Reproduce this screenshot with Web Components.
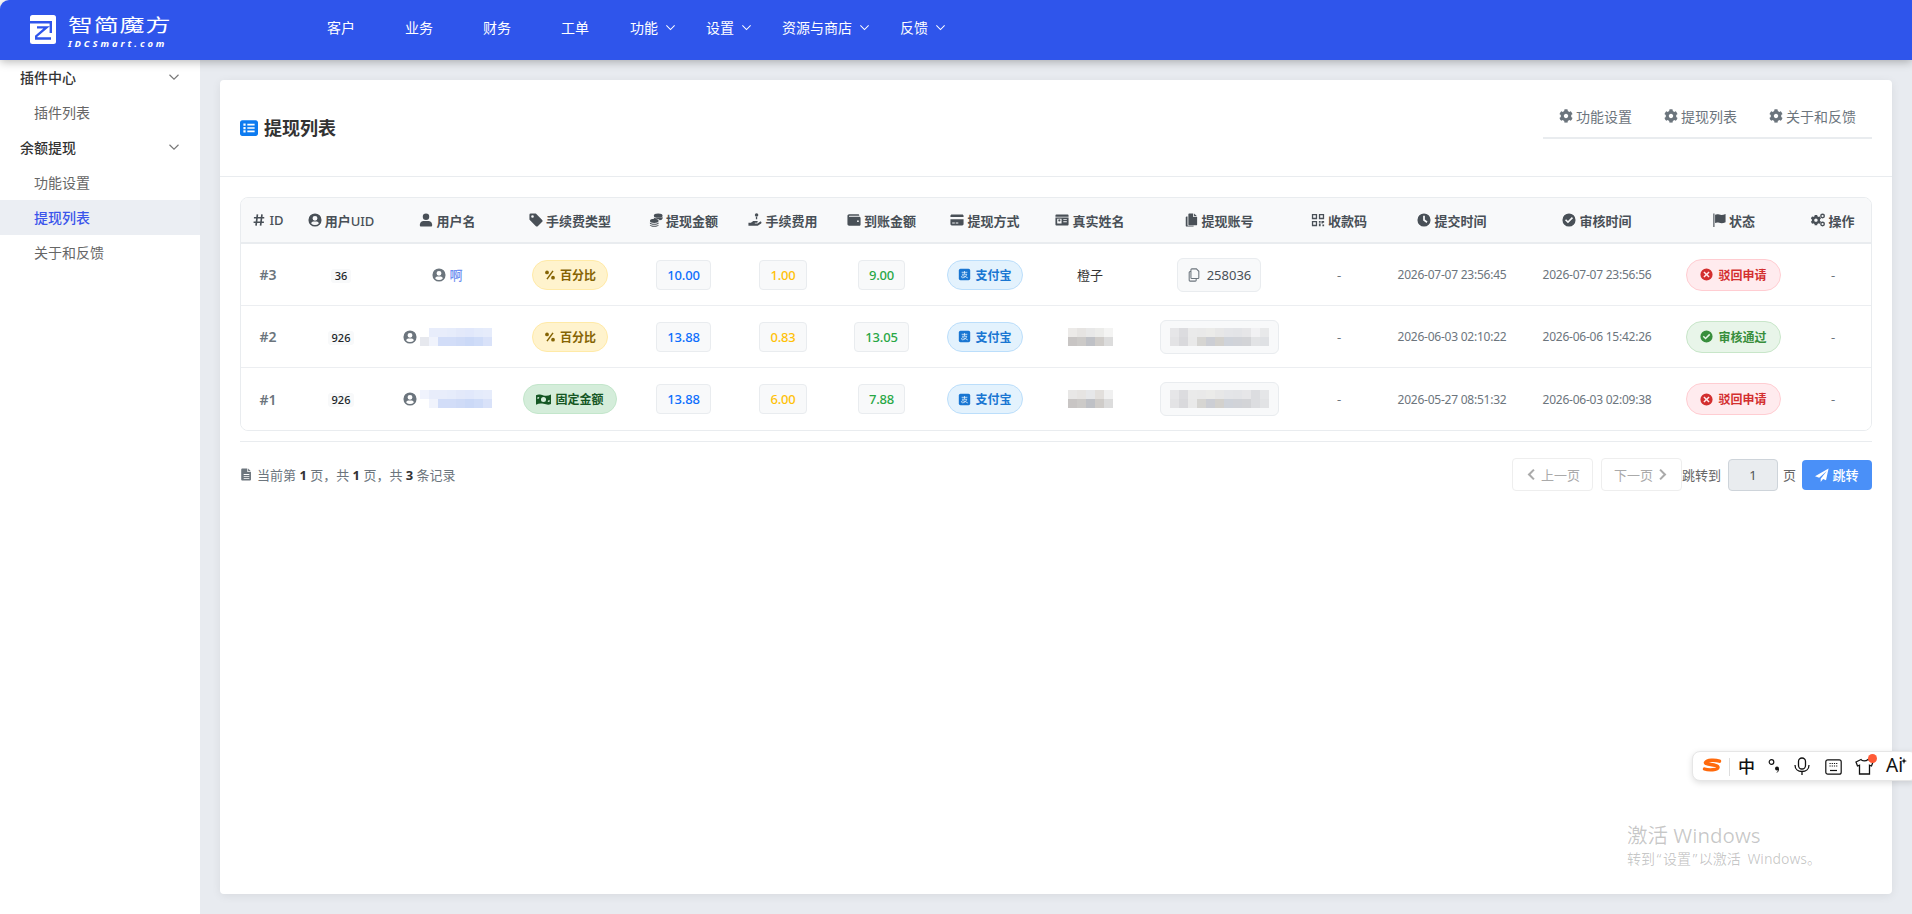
<!DOCTYPE html>
<html lang="zh"><head><meta charset="utf-8"><title>提现列表</title>
<style>
html,body{margin:0;padding:0;height:100%;background:#fff;overflow:hidden}
body{font-family:"Noto Sans","Noto Sans CJK SC",sans-serif;font-size:14px;color:#333}
</style></head><body>
<idc-app>
  <idc-topbar slot="top">
    <nav-item>客户</nav-item><nav-item>业务</nav-item><nav-item>财务</nav-item><nav-item>工单</nav-item>
    <nav-item drop>功能</nav-item><nav-item drop>设置</nav-item><nav-item drop>资源与商店</nav-item><nav-item drop>反馈</nav-item>
  </idc-topbar>
  <idc-sidebar slot="side">
    <side-item head>插件中心</side-item><side-item>插件列表</side-item>
    <side-item head>余额提现</side-item><side-item>功能设置</side-item>
    <side-item active>提现列表</side-item><side-item>关于和反馈</side-item>
  </idc-sidebar>
  <wd-card>
    <tab-item slot="tabs">功能设置</tab-item><tab-item slot="tabs">提现列表</tab-item><tab-item slot="tabs">关于和反馈</tab-item>
    <wd-table>
      <wd-row head>
        <head-cell icon="hash"><span style="font-weight:500">ID</span></head-cell><head-cell icon="ucircle"><span>用户<span style="font-weight:500">UID</span></span></head-cell><head-cell icon="user">用户名</head-cell>
        <head-cell icon="tag">手续费类型</head-cell><head-cell icon="coins">提现金额</head-cell><head-cell icon="hand">手续费用</head-cell>
        <head-cell icon="wallet">到账金额</head-cell><head-cell icon="card">提现方式</head-cell><head-cell icon="idcard">真实姓名</head-cell>
        <head-cell icon="copy">提现账号</head-cell><head-cell icon="qr">收款码</head-cell><head-cell icon="clock">提交时间</head-cell>
        <head-cell icon="check">审核时间</head-cell><head-cell icon="flag">状态</head-cell><head-cell icon="cogs">操作</head-cell>
      </wd-row>
      <wd-row>
        <t-cell kind="id">#3</t-cell><t-cell><uid-badge>36</uid-badge></t-cell>
        <t-cell><user-name>啊</user-name></t-cell>
        <t-cell><s-pill tone="yellow" icon="percent">百分比</s-pill></t-cell>
        <t-cell><amt-box tone="blue">10.00</amt-box></t-cell><t-cell><amt-box tone="orange">1.00</amt-box></t-cell><t-cell><amt-box tone="green">9.00</amt-box></t-cell>
        <t-cell><s-pill tone="blue" icon="alipay">支付宝</s-pill></t-cell>
        <t-cell kind="name">橙子</t-cell>
        <t-cell><acct-box icon>258036</acct-box></t-cell>
        <t-cell kind="dim">-</t-cell><t-cell kind="time">2026-07-07 23:56:45</t-cell><t-cell kind="time">2026-07-07 23:56:56</t-cell>
        <t-cell><s-pill big tone="red" icon="times">驳回申请</s-pill></t-cell><t-cell kind="dim">-</t-cell>
      </wd-row>
      <wd-row>
        <t-cell kind="id">#2</t-cell><t-cell><uid-badge>926</uid-badge></t-cell>
        <t-cell><user-name><mosaic-blur cols="8" colors="#fff,#e8edfb,#e8edfb,#e6ecfb,#e3e9fa,#e1e8fb,#e4ebfb,#e6ecfb,#e6e8ee,#f0f3fc,#d2ddf8,#d2ddf8,#cfdbf7,#cbd9f7,#cfdcf8,#d9e2f9"></mosaic-blur></user-name></t-cell>
        <t-cell><s-pill tone="yellow" icon="percent">百分比</s-pill></t-cell>
        <t-cell><amt-box tone="blue">13.88</amt-box></t-cell><t-cell><amt-box tone="orange">0.83</amt-box></t-cell><t-cell><amt-box tone="green">13.05</amt-box></t-cell>
        <t-cell><s-pill tone="blue" icon="alipay">支付宝</s-pill></t-cell>
        <t-cell><mosaic-blur cols="5" colors="#eceae8,#e6e4e2,#e8e8e8,#ececea,#f4f4f3,#c8c5c4,#cccac8,#bfc1c6,#cfccc9,#dcdcdc"></mosaic-blur></t-cell>
        <t-cell><acct-box><mosaic-blur cols="11" colors="#e6e6e8,#dcdcdf,#eaeaea,#e9e9e9,#ebebe9,#e7e7e7,#e4e5e8,#e3e4e7,#e6e6e8,#f1f1f3,#e8e9ea,#e3e3e5,#d9d9dc,#e9e9e9,#d6d5d2,#ccced4,#d3d1cd,#cfd3da,#d1d3d8,#d3d4d7,#e2e3e5,#dfe1e4"></mosaic-blur></acct-box></t-cell>
        <t-cell kind="dim">-</t-cell><t-cell kind="time">2026-06-03 02:10:22</t-cell><t-cell kind="time">2026-06-06 15:42:26</t-cell>
        <t-cell><s-pill big tone="green" icon="check">审核通过</s-pill></t-cell><t-cell kind="dim">-</t-cell>
      </wd-row>
      <wd-row last>
        <t-cell kind="id">#1</t-cell><t-cell><uid-badge>926</uid-badge></t-cell>
        <t-cell><user-name><mosaic-blur cols="8" colors="#f0f3fd,#e8edfb,#e8edfb,#e6ecfb,#e3e9fa,#e1e8fb,#e4ebfb,#e6ecfb,#fff,#f0f3fc,#d2ddf8,#d2ddf8,#cfdbf7,#cbd9f7,#cfdcf8,#d9e2f9"></mosaic-blur></user-name></t-cell>
        <t-cell><s-pill tone="dgreen" icon="money">固定金额</s-pill></t-cell>
        <t-cell><amt-box tone="blue">13.88</amt-box></t-cell><t-cell><amt-box tone="orange">6.00</amt-box></t-cell><t-cell><amt-box tone="green">7.88</amt-box></t-cell>
        <t-cell><s-pill tone="blue" icon="alipay">支付宝</s-pill></t-cell>
        <t-cell><mosaic-blur cols="5" colors="#e8e7e6,#e6e4e2,#e6e7e9,#e2dfdc,#f0f0f0,#c8c5c4,#cccac8,#bfc1c6,#cfccc9,#dcdcdc"></mosaic-blur></t-cell>
        <t-cell><acct-box><mosaic-blur cols="11" colors="#e6e6e8,#dcdcdf,#eaeaea,#e9e9e9,#ebebe9,#e7e7e7,#e4e5e8,#e3e4e7,#e6e6e8,#dcdde0,#e5e6e8,#e3e3e5,#d9d9dc,#e9e9e9,#d6d5d2,#ccced4,#d3d1cd,#cfd3da,#d1d3d8,#d3d4d7,#dcdde0,#e2e3e5"></mosaic-blur></acct-box></t-cell>
        <t-cell kind="dim">-</t-cell><t-cell kind="time">2026-05-27 08:51:32</t-cell><t-cell kind="time">2026-06-03 02:09:38</t-cell>
        <t-cell><s-pill big tone="red" icon="times">驳回申请</s-pill></t-cell><t-cell kind="dim">-</t-cell>
      </wd-row>
    </wd-table>
    <wd-pager></wd-pager>
  </wd-card>
  <desktop-overlay slot="over"></desktop-overlay>
</idc-app>
<script>
const COG='M487.4 315.7l-42.6-24.6c4.3-23.2 4.3-47 0-70.2l42.6-24.6c4.9-2.8 7.1-8.6 5.5-14-11.1-35.6-30-67.8-54.7-94.6-3.8-4.1-10-5.1-14.8-2.3L380.8 110c-17.9-15.4-38.5-27.3-60.8-35.1V25.8c0-5.6-3.9-10.5-9.4-11.7-36.7-8.2-74.3-7.8-109.2 0-5.5 1.2-9.4 6.1-9.4 11.7V75c-22.2 7.9-42.8 19.8-60.8 35.1L88.7 85.5c-4.9-2.8-11-1.9-14.8 2.3-24.7 26.7-43.6 58.9-54.7 94.6-1.7 5.4.6 11.2 5.5 14L67.3 221c-4.3 23.2-4.3 47 0 70.2l-42.6 24.6c-4.9 2.8-7.1 8.6-5.5 14 11.1 35.6 30 67.8 54.7 94.6 3.8 4.1 10 5.1 14.8 2.3l42.6-24.6c17.9 15.4 38.5 27.3 60.8 35.1v49.2c0 5.6 3.9 10.5 9.4 11.7 36.7 8.2 74.3 7.8 109.2 0 5.5-1.2 9.4-6.1 9.4-11.7v-49.2c22.2-7.9 42.8-19.8 60.8-35.1l42.6 24.6c4.9 2.8 11 1.9 14.8-2.3 24.7-26.7 43.6-58.9 54.7-94.6 1.5-5.5-.7-11.3-5.6-14.1zM256 336c-44.1 0-80-35.9-80-80s35.9-80 80-80 80 35.9 80 80-35.9 80-80 80z';
const ICONS={
hash:'<path d="M6.2 1.500 4.600 14.500M11.400 1.500 9.800 14.500M2.200 5.400H14M1.800 10.600H13.600" fill="none" stroke="currentColor" stroke-width="1.900"/>',
ucircle:'<path fill-rule="evenodd" d="M8 .5a7.500 7.500 0 1 0 0 15 7.500 7.500 0 0 0 0-15zM8 3.300a2.800 2.800 0 1 1 0 5.600 2.800 2.800 0 0 1 0-5.600zM8 13.700a5.900 5.900 0 0 1-4.500-2.100c.6-1.200 1.800-1.900 3.100-1.900h2.800c1.300 0 2.500.7 3.100 1.900A5.900 5.900 0 0 1 8 13.700z"/>',
user:'<circle cx="8" cy="4.200" r="3.700"/><path d="M5.200 9h5.600c2.300 0 4.200 1.900 4.200 4.200v1.100c0 .7-.6 1.200-1.300 1.200H2.300c-.7 0-1.300-.5-1.300-1.200v-1.100C1 10.900 2.900 9 5.200 9z"/>',
tag:'<path fill-rule="evenodd" d="M.5 2A1.500 1.500 0 0 1 2 .5h5c.4 0 .8.2 1.100.4l7 7c.6.6.6 1.500 0 2.100l-5.100 5.100c-.6.6-1.500.6-2.100 0l-7-7C.7 7.800.5 7.400.5 7zM4 2.500a1.500 1.500 0 1 0 0 3 1.500 1.500 0 0 0 0-3z"/>',
coins:'<ellipse cx="10.500" cy="3" rx="5" ry="2.300"/><path d="M5.500 5.300c2 .8 7 .8 10-.6v1.500c0 1-1.500 1.800-3.200 2.100-1-1-3.200-1.600-5-1.600-1 0-1.800-.5-1.800-1.400zM1 9c0-1.300 2.200-2.300 5-2.300s5 1 5 2.300-2.200 2.300-5 2.300S1 10.300 1 9zM1 10.800c1 1 3 1.500 5 1.500s4-.5 5-1.500v1c0 1.100-2.200 1.700-5 1.700s-5-.6-5-1.700zM1 13.400c1 .7 3 1.100 5 1.100s4-.4 5-1.100v.6c0 1-2.200 1.800-5 1.800S1 15 1 14z"/>',
hand:'<circle cx="9.800" cy="2.300" r="2"/><path d="M9 4.500h1.500v2.500H9zM.5 11h2.800l2-1.400c.4-.3.9-.4 1.400-.4h3.400c.8 0 1.200.6 1 1.200-.1.500-.6.8-1.100.8H7.800v.8H11l2.600-1.900c.5-.4 1.200-.3 1.600.2.400.5.300 1.200-.2 1.600l-3.500 2.500c-.3.200-.6.300-1 .3H.5z"/>',
wallet:'<path fill-rule="evenodd" d="M2.500 1.500h10.500c.6 0 1 .4 1 1V3H2.800a.6.600 0 0 0 0 1.200h11.200c.8 0 1.500.7 1.500 1.500v7.300c0 .8-.7 1.500-1.500 1.500h-11.500C1.400 14.500.5 13.600.5 12.500v-9c0-1.100.9-2 2-2zM12.500 8.400a1 1 0 1 0 0 2 1 1 0 0 0 0-2z"/>',
card:'<path d="M.5 3.300c0-.8.7-1.500 1.500-1.500h12c.8 0 1.500.7 1.500 1.500v1.400H.5zM.5 7.200h15v5.500c0 .8-.7 1.500-1.500 1.500H2c-.8 0-1.500-.7-1.500-1.500zM2.500 10.800v1.100h3v-1.100zM6.500 10.800v1.100h3v-1.100z" fill-rule="evenodd"/>',
idcard:'<path fill-rule="evenodd" d="M1.500 1.800h13c.6 0 1 .4 1 1v10.400c0 .6-.4 1-1 1h-13c-.6 0-1-.4-1-1V2.800c0-.6.4-1 1-1zM.5 4.200v.8h15v-.8zM2.500 6.500v5.500h5V6.500zM9.500 7v1h4V7zM9.500 9.500v1h4v-1z"/><circle cx="5" cy="8.500" r="1.300"/>',
copy:'<path d="M6 .5h4.500v4H15v8.500c0 .6-.4 1-1 1H6c-.6 0-1-.4-1-1V1.500c0-.6.4-1 1-1zM11.500.6l3.400 3h-3.400zM4 4v10c0 .3.200.5.500.5H11v.5c0 .3-.2.5-.5.5H3c-.6 0-1-.4-1-1V5c0-.6.400-1 2-1z"/>',
copyo:'<path fill="none" stroke="currentColor" stroke-width="1.200" d="M5.500 1h5.200l2.800 2.800V11c0 .5-.4 1-1 1H5.500c-.5 0-1-.5-1-1V2c0-.5.500-1 1-1zM4.500 4H3.500c-.5 0-1 .5-1 1v9c0 .5.500 1 1 1h6c.5 0 1-.5 1-1v-2"/>',
qr:'<path fill-rule="evenodd" d="M1 1h6v6H1zM2.500 2.500v3h3v-3zM9 1h6v6H9zM10.500 2.500v3h3v-3zM1 9h6v6H1zM2.500 10.500v3h3v-3zM9 9h2v2H9zM12 9h3v2h-1.500v1H12zM9 12h2v3H9zM13 13h2v2h-2z"/>',
clock:'<path fill-rule="evenodd" d="M8 .5a7.500 7.500 0 1 0 0 15 7.500 7.500 0 0 0 0-15zM7 3h2v4.500l3 2.200-1.100 1.600L7 8.500z"/>',
check:'<path fill-rule="evenodd" d="M8 .5a7.500 7.500 0 1 0 0 15 7.500 7.500 0 0 0 0-15zM6.800 11.800 3.400 8.400l1.300-1.300 2.100 2.100 4.500-4.500 1.300 1.300z"/>',
times:'<path fill-rule="evenodd" d="M8 .5a7.500 7.500 0 1 0 0 15 7.500 7.500 0 0 0 0-15zM5.500 4.200 8 6.700l2.500-2.500 1.300 1.300L9.300 8l2.500 2.500-1.300 1.300L8 9.300l-2.500 2.500-1.300-1.300L6.700 8 4.200 5.500z"/>',
flag:'<path d="M1.500 .5h1.300V16H1.500zM3.500 2c1.500-.8 3-.8 4.800-.2 2 .7 4 .7 7.200-.6v9.300c-2.800 1.300-5 1.500-7.200.7-1.800-.7-3.300-.6-4.800.1z"/>',
cogs:`<path transform="translate(-.5 2) scale(.024)" d="${COG}"/><circle cx="13.200" cy="3.500" r="2" fill="none" stroke="currentColor" stroke-width="1.600"/><circle cx="13.200" cy="12.500" r="2" fill="none" stroke="currentColor" stroke-width="1.600"/>`,
percent:'<path d="M12 2.500 4 13.500" stroke="currentColor" stroke-width="2" fill="none"/><circle cx="4" cy="4.500" r="2.500"/><circle cx="12" cy="11.500" r="2.500"/>',
money:'<path fill-rule="evenodd" d="M0 3.500c3-1.500 5-.5 8 .2 3 .7 5.200.4 8-1v10c-3 1.500-5 .5-8-.2-3-.7-5.200-.4-8 1zM8 5.300a2.700 2.700 0 1 0 0 5.400 2.700 2.700 0 0 0 0-5.400zM1.500 5.500v2a2 2 0 0 0 2-2.200zM14.500 8.500a2 2 0 0 0-2 2.200l2-.2z"/>',
alipay:'<rect x="1" y="1" width="14" height="14" rx="2"/><path d="M4.500 5.300h7M8 3.800v3.400M4.800 7.700h6c-.8 2.800-3.300 4.300-5 4.300-1.300 0-1.900-1-1.300-1.800.8-1.200 3.200-.7 7.500 2" fill="none" stroke="#e3f2fd" stroke-width="1"/>',
file:'<path fill-rule="evenodd" d="M3 .5h6v4.500h4.500V14c0 .8-.7 1.500-1.500 1.500H3c-.8 0-1.500-.7-1.500-1.500V2C1.500 1.200 2.200.5 3 .5zM10 .6l3.400 3.400H10zM4.500 7.500v1.200h7V7.500zM4.500 10v1.200h7V10zM4.500 12.500v1h7v-1z"/>',
left:'<path d="M11 2 5 8l6 6" fill="none" stroke="currentColor" stroke-width="2.600"/>',
right:'<path d="M5 2l6 6-6 6" fill="none" stroke="currentColor" stroke-width="2.600"/>',
plane:'<path d="M15.500.5 0 9.300l4.800 1.900 8.700-7.700-7 8.700V16l2.700-3.300 3.400 1.400z"/>',
list:'<path fill-rule="evenodd" d="M2 1h12c1.100 0 2 .9 2 2v10c0 1.100-.9 2-2 2H2c-1.100 0-2-.9-2-2V3c0-1.100.9-2 2-2zM3 4v2h2V4zM6.500 4.300v1.400h6.500V4.300zM3 7v2h2V7zM6.500 7.300v1.400h6.500V7.300zM3 10v2h2v-2zM6.500 10.300v1.400h6.500v-1.400z"/>',
cog:`<path transform="scale(.03125)" d="${COG}"/>`,
chev:'<path d="M2 5l6 6 6-6" fill="none" stroke="currentColor" stroke-width="1.500"/>'
};
function def(name,css,html,init){
  customElements.define(name,class extends HTMLElement{
    constructor(){super();const r=this.attachShadow({mode:'open'});r.innerHTML='<style>'+css+'</style>'+(typeof html==='function'?html(this):html);}
    connectedCallback(){if(init)init(this);}
  });
}
def('x-icon',':host{display:inline-flex;width:var(--s,14px);height:var(--s,14px);flex:none}svg{width:100%;height:100%;fill:currentColor;display:block}','<svg viewBox="0 0 16 16"></svg>',el=>{
  el.shadowRoot.querySelector('svg').innerHTML=ICONS[el.getAttribute('name')]||'';
});
def('idc-app',`:host{display:block;width:1912px;height:914px;position:relative;overflow:hidden}
.wrap{display:grid;grid-template-columns:200px 1fr;grid-template-rows:60px 854px;height:100%}
.top{grid-column:1/3;position:relative;z-index:2}
.main{background:#e8ebf0;padding:20px;box-sizing:border-box;display:flex;min-width:0}`,
`<div class="wrap"><div class="top"><slot name="top"></slot></div><slot name="side"></slot><div class="main"><slot></slot></div></div><slot name="over"></slot>`);
def('idc-topbar',`:host{display:flex;height:60px;background:#2f55eb;color:#fff;box-shadow:0 2px 10px rgba(0,0,0,.28);border-top-left-radius:9px;align-items:flex-start}
.logo{width:302px;box-sizing:border-box;padding:15px 0 0 30px;display:flex;gap:12px;align-items:flex-start;height:60px}
.txt{display:flex;flex-direction:column;width:104px}
.cn{display:block;font:400 25px/25px "Noto Sans CJK SC",sans-serif;letter-spacing:.8px;white-space:nowrap;height:22.500px;transform:scaleY(.72);transform-origin:0 0}
.en{display:block;font:italic 700 9.500px/12px "Noto Sans",sans-serif;letter-spacing:2.900px;white-space:nowrap}
svg{width:26px;height:29px;flex:none}
nav{display:flex;align-items:center}`,
`<div class="logo"><svg viewBox="0 0 26 29"><rect width="26" height="29" rx="2.500" fill="#fff"/><path d="M0 7.300H20.800V18M7 12.400H16.500L6.200 21.200V23.500H21" fill="none" stroke="#2f55eb" stroke-width="2.400"/></svg><div class="txt"><span class="cn">智简魔方</span><span class="en">IDCSmart.com</span></div></div><nav><slot></slot></nav>`);
def('nav-item',`:host{display:flex;align-items:center;height:54px;padding:0 25px;font-size:14px;color:#fff;--s:11px}
:host([drop]){padding:0 14px 0 16px}
x-icon{margin-left:7px}`,el=>`<slot></slot>${el.hasAttribute('drop')?'<x-icon name="chev"></x-icon>':''}`);
def('idc-sidebar',`:host{display:block;background:#fff;height:854px;width:200px}`,`<slot></slot>`);
def('side-item',`:host{display:flex;align-items:center;justify-content:space-between;height:35px;box-sizing:border-box;padding:0 20px 2px 34px;font-size:14px;color:#666;--s:12px}
:host([head]){padding-left:20px;color:#333;font-weight:500}
:host([active]){background:#ebeef3;color:#3b55eb;font-weight:500}
x-icon{color:#777}`,el=>`<span><slot></slot></span>${el.hasAttribute('head')?'<x-icon name="chev"></x-icon>':''}`);
def('tab-item',`:host{display:flex;align-items:center;gap:3px;padding:0 16px 2px;height:42px;font-size:14px;color:#6c757d;--s:14px}`,`<x-icon name="cog"></x-icon><slot></slot>`);
def('wd-card',`:host{display:flex;flex-direction:column;flex:1;background:#fff;border-radius:4px;box-shadow:0 2px 10px rgba(0,0,0,.07);min-width:0}
header{display:flex;justify-content:space-between;align-items:center;height:96px;padding:0 20px;border-bottom:1px solid #e9ecef}
h1{margin:0;display:flex;align-items:center;gap:6px;font-size:18px;font-weight:700;color:#333;line-height:1;--s:18px}
h1 x-icon{color:#0d7bf0}
.tabs{display:flex;border-bottom:2px solid #e9ecef;margin-bottom:22px;width:329px;box-sizing:border-box;height:44px}
.body{padding:20px 20px 0 20px}`,
`<header><h1><x-icon name="list"></x-icon>提现列表</h1><div class="tabs"><slot name="tabs"></slot></div></header><div class="body"><slot></slot></div>`);
def('wd-table',`:host{display:block;border:1px solid #e9ecef;border-radius:8px;overflow:hidden;--cols:54px 92px 121px 124px 103px 96px 101px 106px 104px 154px 86px 140px 150px 123px 76px}`,`<slot></slot>`);
def('wd-row',`:host{display:grid;grid-template-columns:var(--cols);height:62px;box-sizing:border-box;border-bottom:1px solid #eceef1;align-items:center;background:#fff}
:host([head]){height:46px;background:#f8f9fa;border-bottom:2px solid #e9ecef}
:host([last]){border-bottom:0}`,`<slot></slot>`);
def('head-cell',`:host{display:flex;justify-content:center;align-items:center;gap:3px;font-size:13px;font-weight:600;color:#495057;--s:14px;white-space:nowrap}`,el=>`<x-icon name="${el.getAttribute('icon')}"></x-icon><slot></slot>`);
def('t-cell',`:host{display:flex;justify-content:center;align-items:center;white-space:nowrap;font-size:13px;color:#333}
:host([kind=id]){font-weight:600;color:#6c757d;font-size:14px}
:host([kind=dim]){color:#6c757d;font-size:13px}
:host([kind=time]){color:#6c757d;font-size:12px;letter-spacing:-.24px}
:host([kind=name]){color:#333;font-size:13px}`,`<slot></slot>`);
def('uid-badge',`:host{display:inline-block;background:#f8f9fa;border-radius:3px;padding:0 4px;font-size:11px;font-weight:500;line-height:14px;color:#212529;margin-top:2px}`,`<slot></slot>`);
def('user-name',`:host{display:flex;align-items:center;gap:1px;color:#6d8ff0;font-size:13px;font-weight:500;--s:14px}x-icon{color:#6c757d;margin-right:2px}`,`<x-icon name="ucircle"></x-icon><slot></slot>`);
def('mosaic-blur',`:host{display:inline-grid;grid-auto-rows:9px;grid-auto-columns:9px}i{display:block}`,'',el=>{
  const cs=el.getAttribute('colors').split(','),n=+el.getAttribute('cols');
  el.style.gridTemplateColumns=`repeat(${n},9px)`;
  el.shadowRoot.append(...cs.map(c=>{const i=document.createElement('i');i.style.background=c;return i;}));
});
def('s-pill',`:host{display:inline-flex;align-items:center;justify-content:center;gap:4px;height:30px;box-sizing:border-box;padding:0 11px;border-radius:15px;border:1px solid;font-size:12px;font-weight:700;--s:12px;white-space:nowrap}
:host([big]){height:32px;border-radius:16px;padding:0 13px;--s:13px;gap:5px}
:host([tone=yellow]){background:#fff3cd;border-color:#ffeaa7;color:#856404}
:host([tone=dgreen]){background:#d4edda;border-color:#c3e6cb;color:#155724;--s:15px;padding:0 12px}
:host([tone=blue]){background:#e3f2fd;border-color:#bbdefb;color:#1976d2;--s:13px;padding:0 10.500px}
:host([tone=red]){background:#ffebee;border-color:#ffcdd2;color:#d32f2f}
:host([tone=green]){background:#e8f5e9;border-color:#c8e6c9;color:#388e3c}`,el=>`<x-icon name="${el.getAttribute('icon')}"></x-icon><slot></slot>`);
def('amt-box',`:host{display:inline-flex;align-items:center;height:30px;box-sizing:border-box;padding:0 10px;background:#f8f9fa;border:1px solid #e9ecef;border-radius:4px;font-size:13px;font-weight:500;letter-spacing:-.2px}
:host([tone=blue]){color:#0d6efd}:host([tone=orange]){color:#ffc107}:host([tone=green]){color:#28a745}`,`<slot></slot>`);
def('acct-box',`:host{display:inline-flex;align-items:center;gap:6px;padding:6px 9px;min-height:20px;background:#f8f9fa;border:1px solid #e9ecef;border-radius:6px;font-size:13px;color:#495057;--s:14px}x-icon{color:#6c757d}`,el=>`${el.hasAttribute('icon')?'<x-icon name="copyo"></x-icon>':''}<slot></slot>`);
def('wd-pager',`:host{display:flex;align-items:center;justify-content:space-between;margin-top:10px;border-top:1px solid #e9ecef;padding-top:16px;font-size:13px;color:#6c757d}
.info{display:flex;align-items:center;gap:4px;--s:13px}
.info b{color:#333;font-weight:700}
.r{display:flex;align-items:center;color:#666}
.btn{display:flex;align-items:center;justify-content:center;gap:3px;width:81px;height:33px;box-sizing:border-box;border:1px solid #eee;border-radius:4px;color:#aaa;--s:13px;background:#fff;margin-right:8px}
.btn.n{margin-right:0}
.inp{width:50px;height:32px;box-sizing:border-box;background:#e9ecef;border:1px solid #ced4da;border-radius:4px;margin:0 5px 0 7px;display:flex;align-items:center;justify-content:center;color:#555}
.go{display:flex;align-items:center;justify-content:center;gap:3px;width:70px;height:30px;margin-left:6px;background:#4a90f8;color:#fff;border-radius:4px;font-weight:500;--s:14px}`,
`<div class="info"><x-icon name="file"></x-icon><span>当前第 <b>1</b> 页，共 <b>1</b> 页，共 <b>3</b> 条记录</span></div>
<div class="r"><div class="btn"><x-icon name="left"></x-icon>上一页</div><div class="btn n">下一页<x-icon name="right"></x-icon></div><span>跳转到</span><div class="inp">1</div><span>页</span><div class="go"><x-icon name="plane"></x-icon>跳转</div></div>`);
def('desktop-overlay',`:host{display:block;position:absolute;inset:0;pointer-events:none;z-index:5}
.wm{position:absolute;left:1627px;top:821px;color:rgba(0,0,0,.22);font-family:"Open Sans","Noto Sans CJK SC",sans-serif}
.wm div:first-child{font-size:20.500px;line-height:28px}
.wm div:last-child{font-size:14px;line-height:20px;margin-top:0}
.wm i{font-style:normal;padding:0 1.500px}
.wm em{font-style:normal;padding-left:3px}
.ime{position:absolute;left:1692px;top:751px;width:226px;height:30px;background:#fff;border:1px solid #e6e6e6;box-sizing:border-box;border-radius:8px;box-shadow:0 2px 6px rgba(0,0,0,.13);display:flex;align-items:center;color:#111}
.ime>*{position:absolute}
.z{font:500 17px/1 "Noto Sans CJK SC",sans-serif;left:45px;top:5px}
.a{font:400 19px/1 "Noto Sans",sans-serif;left:193px;top:4px}`,
`<div class="wm"><div>激活 Windows</div><div>转到<i>“</i>设置<i>”</i>以激活 <em>Windows</em>。</div></div>
<div class="ime">
<svg style="left:9px;top:6px" width="20" height="16" viewBox="0 0 20 16"><path d="M17.500 3.200C13 1.700 5 1.800 3.500 4.500c-1.200 2.300 13 1.800 12.500 5-.4 2.500-9 3-13.500 1.500" fill="none" stroke="#ff6a0d" stroke-width="3.400" stroke-linecap="round"/></svg>
<div style="left:36px;top:6px;width:1px;height:18px;background:#ddd"></div>
<span class="z">中</span>
<svg style="left:75px;top:6px" width="12" height="17" viewBox="0 0 12 17"><circle cx="3.500" cy="4" r="2.300" fill="none" stroke="#111" stroke-width="1.200"/><circle cx="9" cy="10.500" r="2" fill="#111"/><path d="M10.500 11c0 1.500-.5 2.500-1.500 3.500" stroke="#111" stroke-width="1" fill="none"/></svg>
<svg style="left:101px;top:5px" width="16" height="19" viewBox="0 0 16 19" fill="none" stroke="#111" stroke-width="1.300"><rect x="4.500" y="1" width="7" height="11" rx="3.500"/><path d="M1 8c0 4 3 6.500 7 6.500S15 12 15 8M8 14.500V18" /></svg>
<svg style="left:132px;top:7px" width="17" height="16" viewBox="0 0 17 16" fill="none" stroke="#111" stroke-width="1.200"><rect x=".8" y=".8" width="15.400" height="14.400" rx="2"/><path d="M4.500 4.500h8M4.500 7h8" stroke-dasharray="1.200 1"/><path d="M5 11.500h7"/></svg>
<svg style="left:162px;top:6px" width="19" height="17" viewBox="0 0 19 17" fill="none" stroke="#111" stroke-width="1.300"><path d="M6 1.500c1 1.800 5 1.800 7 0l5 2.500-1.500 4-2-.8V16H4.500V7.200l-2 .8L1 4z"/></svg>
<svg style="left:175px;top:2px" width="9" height="9" viewBox="0 0 8 8"><circle cx="4" cy="4" r="4" fill="#ff5a36"/></svg>
<span class="a">Ai</span>
<svg style="left:208px;top:6px" width="6" height="6" viewBox="0 0 6 6"><path d="M3 0l.8 2.200L6 3l-2.200.8L3 6l-.8-2.200L0 3l2.200-.8z" fill="#111"/></svg>
</div>`);
</script>
</body></html>
